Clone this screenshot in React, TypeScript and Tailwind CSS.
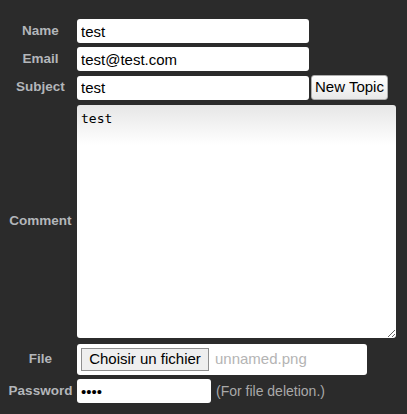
import React from "react";

const labelCls =
  "w-[77px] shrink-0 pl-[4px] text-center text-[13.5px] font-bold text-[#b3b6ba]";
const inputCls =
  "h-[24px] rounded-[3px] bg-white px-[4px] text-[15px] text-black outline-none border-0";

function Row({ label, children, className = "" }: { label: string; children: React.ReactNode; className?: string }) {
  return (
    <div className={`flex items-center ${className}`}>
      <div className={labelCls}>{label}</div>
      <div className="flex items-center">{children}</div>
    </div>
  );
}

export default function App() {
  return (
    <div
      className="min-h-[414px] w-full bg-[#2b2b2b] pt-[19px]"
      style={{ fontFamily: '"Liberation Sans", Arial, sans-serif' }}
    >
      <form className="flex flex-col">
        <Row label="Name">
          <input className={`${inputCls} w-[232px]`} defaultValue="test" />
        </Row>
        <Row label="Email" className="mt-[4px]">
          <input className={`${inputCls} w-[232px]`} defaultValue="test@test.com" />
        </Row>
        <Row label="Subject" className="mt-[4px]">
          <input className={`${inputCls} w-[232px]`} defaultValue="test" />
          <button
            type="button"
            className="ml-[2px] h-[25px] w-[77px] rounded-[3px] border border-[#adadad] bg-gradient-to-b from-[#ffffff] to-[#e8e8e8] text-[15px] text-black"
          >
            New Topic
          </button>
        </Row>
        <Row label="Comment" className="mt-[5px]">
          <textarea
            className="h-[233px] w-[319px] resize rounded-[3px] bg-[linear-gradient(#e6e6e6,#ffffff_40px)] px-[4px] pt-[4px] text-[13px] text-black outline-none"
            style={{ fontFamily: '"DejaVu Sans Mono", monospace' }}
            defaultValue="test"
          />
        </Row>
        <Row label="File" className="mt-[6px]">
          <div className="flex h-[31px] w-[290px] items-center rounded-[3px] bg-white pl-[4px]">
            <span className="flex h-[23px] w-[128px] items-center justify-center border border-[#8f8f8f] bg-[#efefef] text-[15px] text-black">
              Choisir un fichier
            </span>
            <span className="ml-[6px] text-[15px] text-[#b4b4b4]">unnamed.png</span>
          </div>
        </Row>
        <Row label="Password" className="mt-[4px]">
          <input
            type="password"
            className={`${inputCls} w-[134px] text-[10px]`}
            defaultValue="test"
          />
          <span className="ml-[5px] text-[14px] text-[#a9a9a9]">(For file deletion.)</span>
        </Row>
      </form>
    </div>
  );
}
